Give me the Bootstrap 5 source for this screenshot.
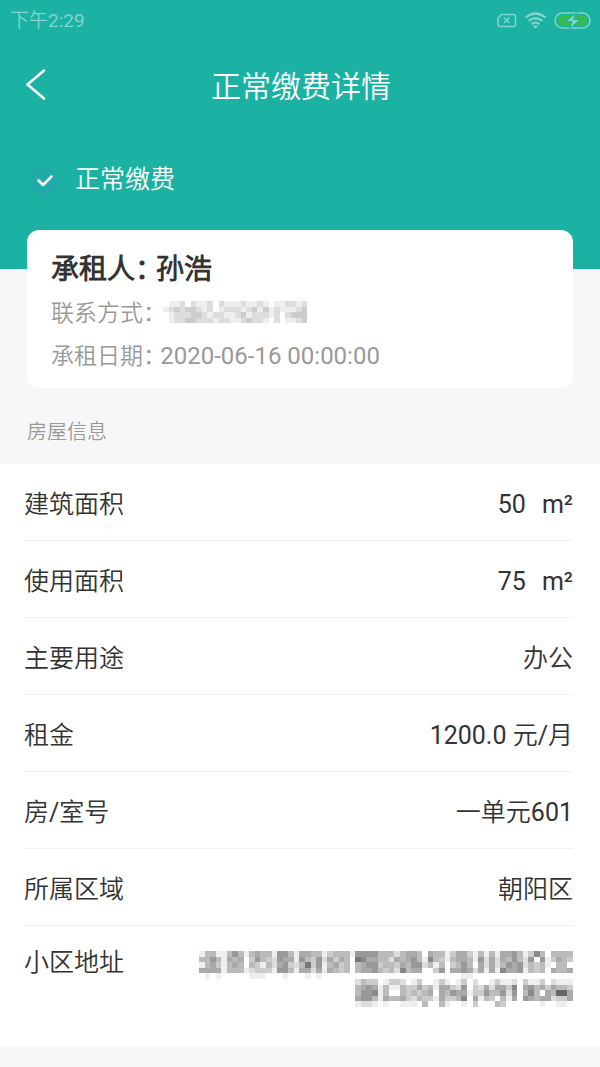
<!DOCTYPE html>
<html lang="zh-CN">
<head>
<meta charset="utf-8">
<meta name="viewport" content="width=device-width, initial-scale=1">
<title>正常缴费详情</title>
<link href="https://cdn.jsdelivr.net/npm/bootstrap@5.3.0/dist/css/bootstrap.min.css" rel="stylesheet">
<style>
body{font-family:Roboto,"Noto Sans CJK SC DemiLight","Noto Sans CJK SC",sans-serif;font-size:25px;line-height:30px;color:#333;background:#f7f7f9}
.teal-head{background:#1bb1a3;padding-bottom:74px}
.sys-bar{height:42px;padding:0 9px 0 10px;font-size:19px;color:#85d3cb}
.title-bar{height:90px;grid-template-columns:72px 1fr 70px}
.title-bar h1{font-size:30px;line-height:36px;font-weight:400}
.back-btn{height:72px}
.back-btn svg{margin-bottom:4px}
.pay-state{padding:33px 30px 0;gap:15px}
.tenant-card{margin:-39px 27px 0;padding:22px 24px 10px;border-radius:12px}
.tenant-card h2{font-size:28px;line-height:36px;font-weight:700;margin-bottom:5px}
.tenant-card p{font-size:23px;line-height:42px;color:#999;margin:0}
.tenant-card time{font-size:24px}
.half-colon{font-feature-settings:"halt"}
.section-label{font-size:20px;line-height:30px;color:#999;padding:29px 27px 17px;font-weight:400}
.info-list{padding:0 27px 0 24px}
.info-row{min-height:77px;padding-top:5px;border-bottom:1px solid #f0f0f1}
.info-row dt{font-weight:400}
.address-row{min-height:120px;padding-top:22px}
.address-row dd{padding-top:3px}
</style>
</head>
<body>
<header class="teal-head text-white">
  <div class="sys-bar d-flex align-items-center justify-content-between">
    <span>下午2:29</span>
    <span class="d-flex align-items-center">
      <svg width="95" height="22" viewBox="0 0 95 22" fill="none" stroke="#85d3cb" aria-hidden="true">
        <path d="M5.500 4.500H17.500Q19.500 4.500 19.500 6.500V14.500Q19.500 16.500 17.500 16.500H4Q2 16.500 2 14.500V8Z" stroke-width="1.500"/>
        <path d="M8 7.500L13.500 13M13.500 7.500L8 13" stroke-width="1.500"/>
        <path d="M29.500 7.500Q39.500-.5 49.500 7.500M32.500 11Q39.500 5.500 46.500 11M35.500 14.200Q39.500 11 43.500 14.200" stroke-width="2.200"/>
        <path d="M37 16.200Q39.500 14.200 42 16.200L39.500 18.500Z" fill="#85d3cb" stroke="none"/>
        <rect x="59" y="3" width="35" height="15" rx="7.500" stroke-width="1.500"/>
        <rect x="61.500" y="5.500" width="30" height="10" rx="5" fill="#35ba55" stroke="none"/>
        <path d="M80.500 2.500L70 11.500H76L73.500 19L84 9.500H77.500Z" fill="#85d3cb" stroke="#1bb1a3"/>
      </svg>
    </span>
  </div>
  <nav class="title-bar d-grid align-items-center">
    <button type="button" class="back-btn btn p-0 border-0 d-flex align-items-center justify-content-center" aria-label="返回">
      <svg width="22" height="32" viewBox="0 0 22 32" fill="none" stroke="#fff" stroke-width="2.600" stroke-linecap="round" stroke-linejoin="round"><path d="M19 1.500L2.500 15.500L19 29.500"/></svg>
    </button>
    <h1 class="m-0 text-center">正常缴费详情</h1>
  </nav>
  <div class="pay-state d-flex align-items-center">
    <svg width="30" height="30" viewBox="0 0 30 30" aria-hidden="true"><circle cx="15" cy="15" r="14.500" fill="#20aaa9"/><path d="M8.500 15.500L13 20L21.500 11.500" fill="none" stroke="#fff" stroke-width="2.500" stroke-linecap="round" stroke-linejoin="round"/></svg>
    <span>正常缴费</span>
  </div>
</header>
<main>
  <section class="tenant-card bg-white position-relative">
    <h2>承租人<span class="half-colon">：</span> 孙浩</h2>
    <p class="d-flex align-items-start"><span>联系方式<span class="half-colon">：</span></span><svg class="ms-2 mt-2" data-mosaic="phone" role="img" aria-label="已隐藏的联系方式"></svg></p>
    <p>承租日期<span class="half-colon">：</span> <time datetime="2020-06-16T00:00:00">2020-06-16 00:00:00</time></p>
  </section>
  <h3 class="section-label m-0">房屋信息</h3>
  <dl class="info-list bg-white m-0">
    <div class="info-row d-flex align-items-center justify-content-between"><dt>建筑面积</dt><dd class="m-0 d-flex gap-3"><span>50</span><span>m²</span></dd></div>
    <div class="info-row d-flex align-items-center justify-content-between"><dt>使用面积</dt><dd class="m-0 d-flex gap-3"><span>75</span><span>m²</span></dd></div>
    <div class="info-row d-flex align-items-center justify-content-between"><dt>主要用途</dt><dd class="m-0">办公</dd></div>
    <div class="info-row d-flex align-items-center justify-content-between"><dt>租金</dt><dd class="m-0">1200.0 元/月</dd></div>
    <div class="info-row d-flex align-items-center justify-content-between"><dt>房/室号</dt><dd class="m-0">一单元601</dd></div>
    <div class="info-row d-flex align-items-center justify-content-between"><dt>所属区域</dt><dd class="m-0">朝阳区</dd></div>
    <div class="address-row d-flex align-items-start justify-content-between"><dt class="fw-normal">小区地址</dt><dd class="m-0 d-flex"><svg data-mosaic="address" role="img" aria-label="已隐藏的小区地址"></svg></dd></div>
  </dl>
</main>
<script src="https://cdn.jsdelivr.net/npm/bootstrap@5.3.0/dist/js/bootstrap.bundle.min.js"></script>
<script>
// Private values are shown as a mosaic: one digit per cell, 0 is white and 9 is darkest.
const mosaics = {
  phone: {width: 150, height: 22, rows: [
    '011202112021112112101122120',
    '123233212012221231312111230',
    '012223321221123122212023330',
    '012233222122112322102011230']},
  address: {width: 374, height: 56, rows: [
    '1441146414544166415544134441666644424554054413553141415564137404444',
    '4464154503643265516436253540875544254564174314554162525464260613543',
    '1453145404314256324836145340456634435466241403464052524656243410440',
    '5555144412333166415525154340455643427455003605565251517556143405445',
    '0101000001110001000101000000000000000000000000011000000000000000000',
    '0000000000000000000000000000243301332013001310130200131120311302111',
    '0000000000000000000000000000456514114335341553260325255370564535443',
    '0000000000000000000000000000466714004343450546551336446260474054995',
    '0000000000000000000000000000566415445324331533470514304150654552335',
    '0000000000000000000000000000122101001110400410010300043000000100110']}
};
document.querySelectorAll('[data-mosaic]').forEach(svg => {
  const m = mosaics[svg.dataset.mosaic];
  svg.setAttribute('width', m.width);
  svg.setAttribute('height', m.height);
  svg.setAttribute('viewBox', `0 0 ${m.rows[0].length} ${m.rows.length}`);
  svg.setAttribute('preserveAspectRatio', 'none');
  svg.setAttribute('shape-rendering', 'crispEdges');
  svg.innerHTML = m.rows.map((row, y) => [...row].map((n, x) => {
    const g = 255 - n * 17;
    return n > 0 ? `<rect x="${x}" y="${y}" width="1" height="1" fill="rgb(${g},${g},${g})"/>` : '';
  }).join('')).join('');
});
</script>
</body>
</html>
